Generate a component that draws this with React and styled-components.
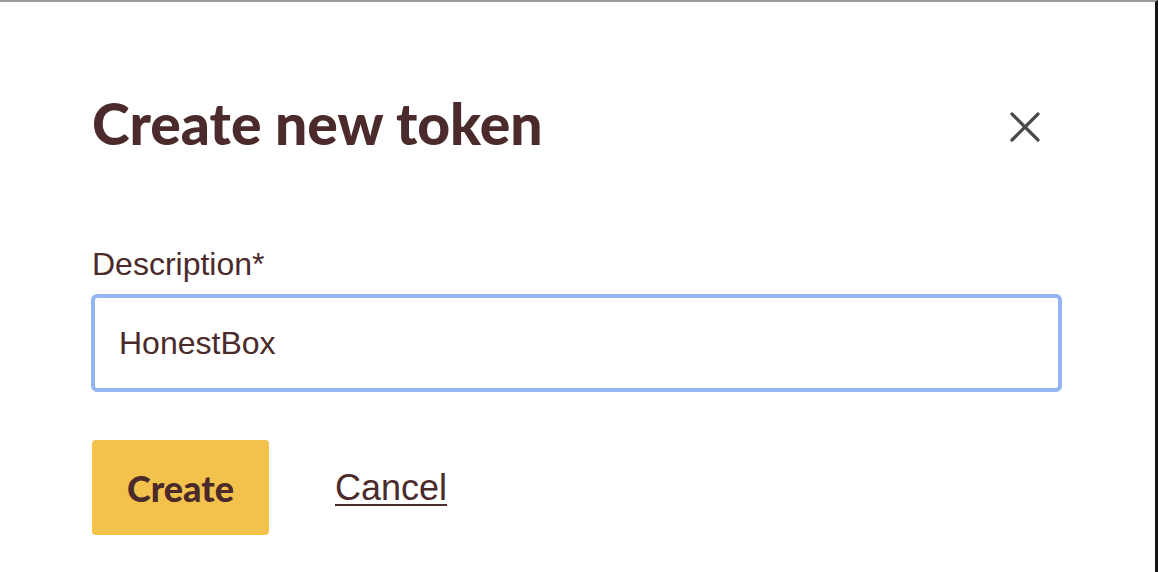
import React from 'react';
import styled, { createGlobalStyle } from 'styled-components';

const GlobalStyle = createGlobalStyle`
  html, body {
    margin: 0;
    padding: 0;
    background: #ffffff;
  }
  body {
    font-family: "Liberation Sans", Arial, sans-serif;
  }
`;

const Dialog = styled.div`
  box-sizing: border-box;
  width: 1158px;
  height: 572px;
  border-top: 2px solid #9a9a9a;
  border-right: 3px solid #141414;
  padding: 89px 94px 0 92px;
  display: flex;
  flex-direction: column;
  color: #4b2a2b;
`;

const Header = styled.div`
  display: flex;
  align-items: center;
  justify-content: space-between;
  height: 64px;
`;

const Title = styled.h1`
  margin: 0;
  font-family: Lato, "Noto Sans", sans-serif;
  font-weight: 900;
  font-size: 57px;
  line-height: 64px;
`;

const CloseButton = styled.button`
  border: none;
  background: none;
  padding: 0;
  margin-right: 18px;
  margin-top: 8px;
  width: 36px;
  height: 36px;
  display: flex;
  align-items: center;
  justify-content: center;
  cursor: pointer;
`;

const Field = styled.div`
  margin-top: 89px;
  display: flex;
  flex-direction: column;
`;

const Label = styled.label`
  font-size: 32px;
  line-height: 40px;
  margin-bottom: 10px;
`;

const Input = styled.input`
  box-sizing: border-box;
  width: 971px;
  margin-left: -1px;
  height: 98px;
  border: 4px solid #94b4f2;
  border-radius: 6px;
  padding: 0 24px;
  font-family: "Liberation Sans", Arial, sans-serif;
  font-size: 32px;
  color: #4b2a2b;
  outline: none;
`;

const Actions = styled.div`
  margin-top: 48px;
  display: flex;
  align-items: center;
  gap: 66px;
`;

const PrimaryButton = styled.button`
  width: 177px;
  height: 95px;
  border: none;
  border-radius: 4px;
  background: #f3c24d;
  color: #4b2a2b;
  font-family: Lato, "Noto Sans", sans-serif;
  font-weight: 900;
  font-size: 36px;
  cursor: pointer;
`;

const LinkButton = styled.a`
  font-size: 36px;
  color: #4b2a2b;
  text-decoration: underline;
  text-underline-offset: 4px;
  text-decoration-thickness: 2px;
  cursor: pointer;
`;

const App = () => {
  return (
    <>
      <GlobalStyle />
      <Dialog>
        <Header>
          <Title>Create new token</Title>
          <CloseButton aria-label="Close">
            <svg width="30" height="30" viewBox="0 0 30 30">
              <path
                d="M2 2 L28 28 M28 2 L2 28"
                stroke="#4a4a4a"
                strokeWidth="3.2"
                strokeLinecap="round"
              />
            </svg>
          </CloseButton>
        </Header>
        <Field>
          <Label>Description*</Label>
          <Input defaultValue="HonestBox" />
        </Field>
        <Actions>
          <PrimaryButton>Create</PrimaryButton>
          <LinkButton>Cancel</LinkButton>
        </Actions>
      </Dialog>
    </>
  );
};

export default App;
